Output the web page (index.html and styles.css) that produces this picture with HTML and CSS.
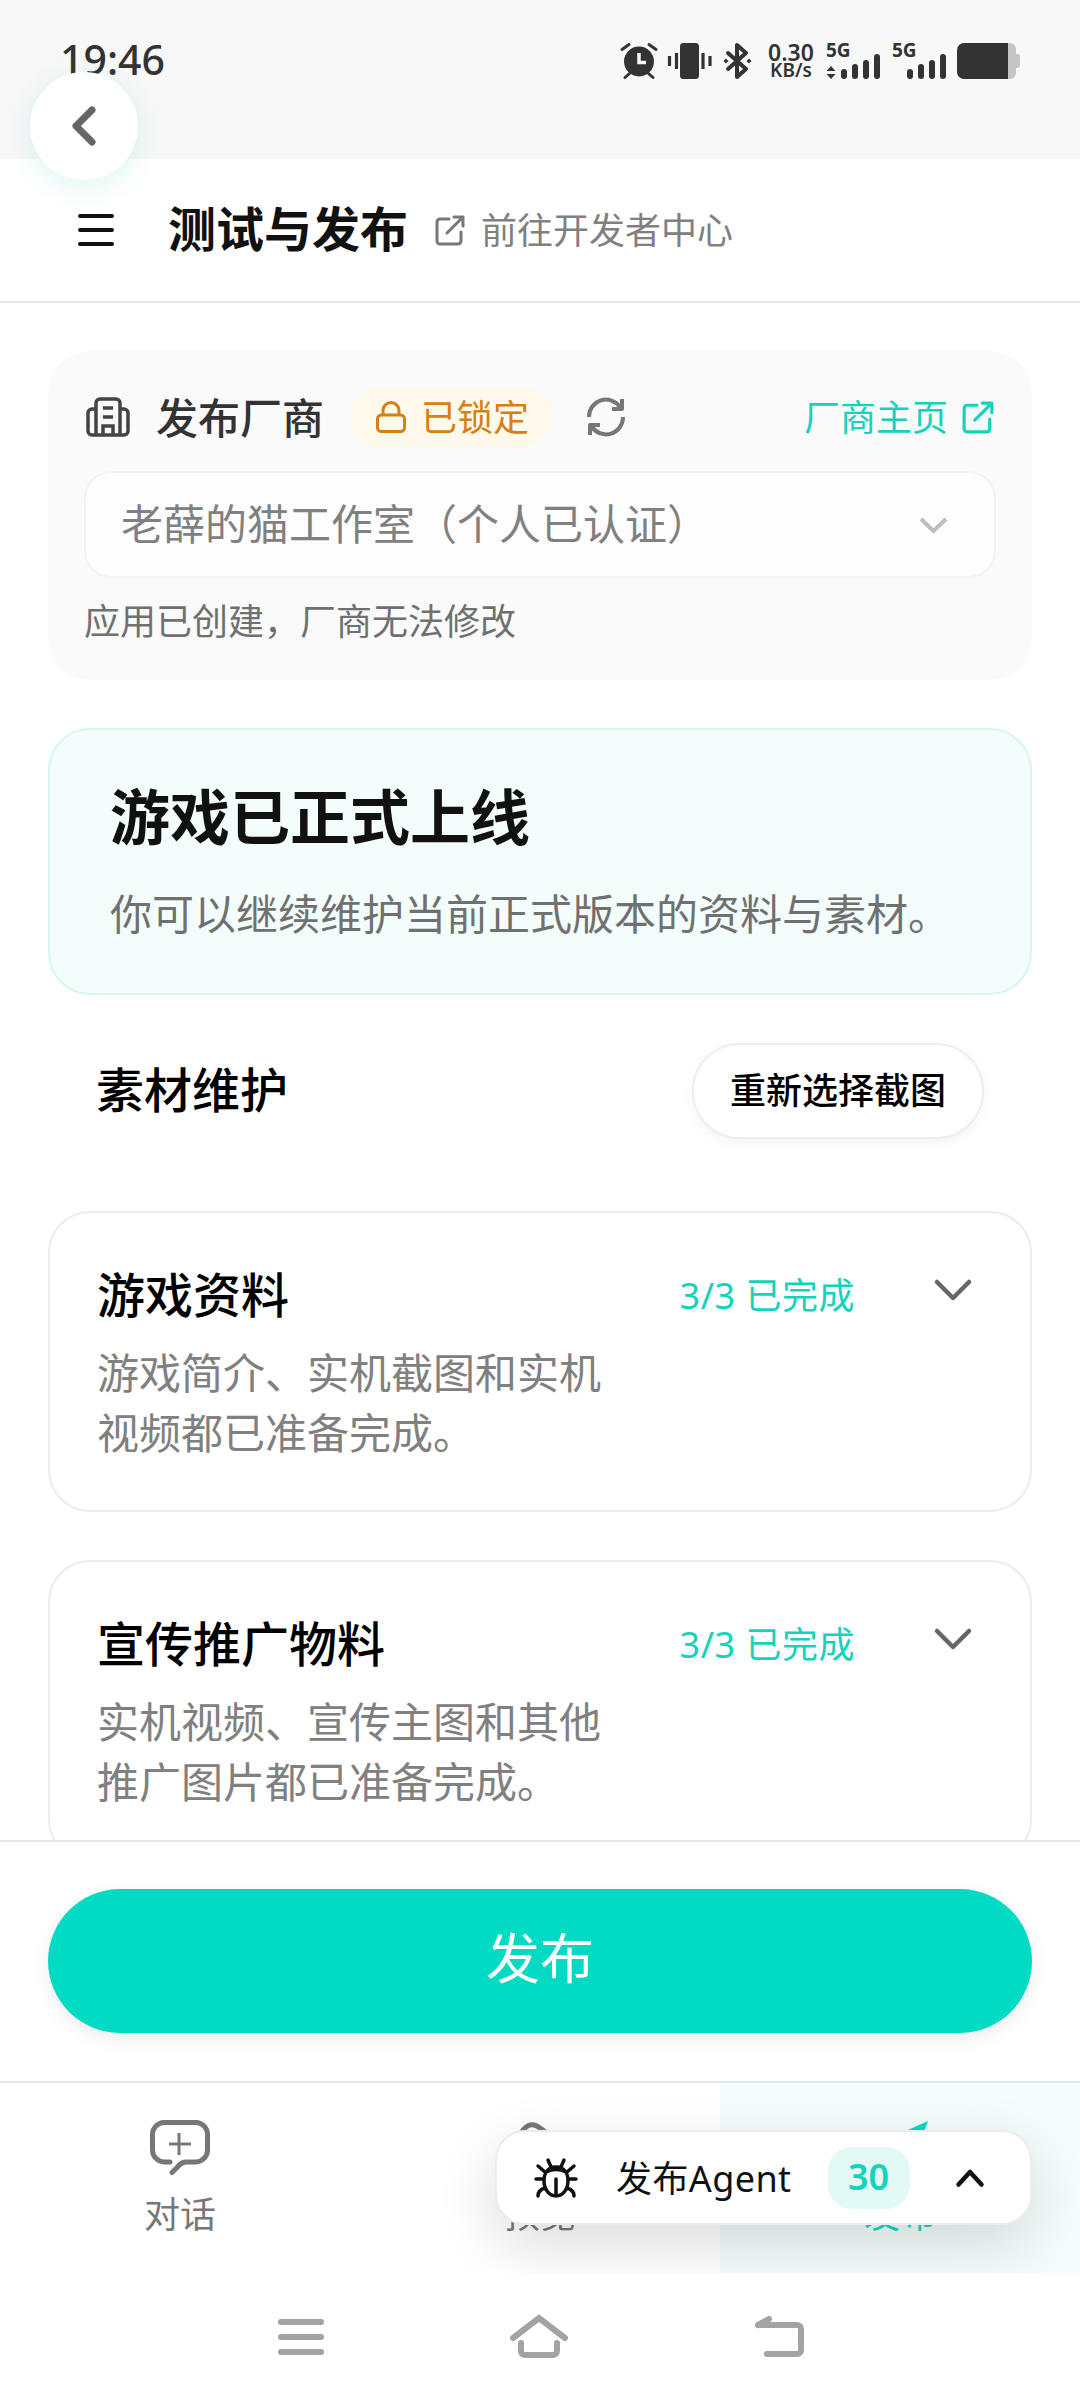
FILE: index.html
```html
<!DOCTYPE html>
<html lang="zh-CN">
<head>
    <meta charset="UTF-8">
    <title>测试与发布</title>
    <link rel="stylesheet" href="styles.css">
</head>
<body>

<div class="screen">

    <div class="status-bar">
        <span class="status-time">19:46</span>
        <div class="status-icons">
            <svg class="ico-alarm" width="36" height="36" viewBox="0 0 36 36">
                <circle cx="18" cy="18.5" r="15" fill="#333"/>
                <path d="M18 10v9.500h7" fill="none" stroke="#f8f8f8" stroke-width="3.500"/>
                <path d="M1 6.500L8 1.500M28 1.500l7 5M4 34.500l4.500-4M27.500 30.500l4.500 4" fill="none" stroke="#333" stroke-width="3" stroke-linecap="round"/>
            </svg>
            <svg class="ico-vibrate" width="44" height="36" viewBox="0 0 44 36">
                <rect x="12" y="0" width="19" height="36" rx="3.500" fill="#333"/>
                <path d="M1.500 13v10M8.500 10v16M35 10v16M42 13v10" stroke="#333" stroke-width="3.200"/>
            </svg>
            <svg class="ico-bt" width="29" height="36" viewBox="0 0 29 36">
                <path d="M5 10L23 26L14 34V2L23 10L5 26" fill="none" stroke="#333" stroke-width="4" stroke-linejoin="round" stroke-linecap="round"/>
                <path d="M3 15.500L5.500 18L3 20.500L0.500 18zM26 15.500L28.500 18L26 20.500L23.500 18z" fill="#333"/>
            </svg>
            <div class="status-speed">
                <span class="speed-num">0.30</span>
                <span class="speed-unit">KB/s</span>
            </div>
            <div class="signal">
                <span class="signal-text">5G</span>
                <svg width="54" height="22" viewBox="0 0 54 22">
                    <path d="M5 9l4.500 5h-9zM5 22l4.500-5h-9z" fill="#333"/>
                    <rect x="15" y="12" width="6" height="10" rx="3" fill="#333"/>
                    <rect x="26" y="7" width="6" height="15" rx="3" fill="#333"/>
                    <rect x="37" y="3" width="6" height="19" rx="3" fill="#333"/>
                    <rect x="48" y="-3" width="6" height="25" rx="3" fill="#333"/>
                </svg>
            </div>
            <div class="signal">
                <span class="signal-text">5G</span>
                <svg width="54" height="22" viewBox="0 0 54 22">
                    <rect x="15" y="12" width="6" height="10" rx="3" fill="#333"/>
                    <rect x="26" y="7" width="6" height="15" rx="3" fill="#333"/>
                    <rect x="37" y="3" width="6" height="19" rx="3" fill="#333"/>
                    <rect x="48" y="-3" width="6" height="25" rx="3" fill="#333"/>
                </svg>
            </div>
            <svg class="ico-battery" width="63" height="36" viewBox="0 0 63 36">
                <path d="M51 0h2a6 6 0 0 1 6 6v5h1a3 3 0 0 1 3 3v8a3 3 0 0 1-3 3h-1v5a6 6 0 0 1-6 6h-2z" fill="#c6c6c6"/>
                <path d="M7 0h44v36H7a7 7 0 0 1-7-7V7a7 7 0 0 1 7-7z" fill="#333"/>
            </svg>
        </div>
    </div>

    <div class="page-header">
        <svg class="menu-icon" width="36" height="32" viewBox="0 0 36 32">
            <path d="M2 2h32M2 16h32M2 30h32" stroke="#111" stroke-width="4" stroke-linecap="round"/>
        </svg>
        <h1 class="page-title">测试与发布</h1>
        <svg class="ext-icon" width="30" height="30" viewBox="0 0 30 30">
            <path d="M14 4H5a3 3 0 0 0-3 3v19a3 3 0 0 0 3 3h18a3 3 0 0 0 3-3V17M12 18L28 2M19 2h9v9" fill="none" stroke="#777" stroke-width="3" stroke-linecap="round" stroke-linejoin="round"/>
        </svg>
        <span class="dev-link">前往开发者中心</span>
    </div>

    <div class="content">
        <div class="vendor-card">
            <div class="vendor-row">
                <svg class="building-icon" width="44" height="40" viewBox="0 0 44 40">
                    <path d="M10 12H6a4 4 0 0 0-4 4v18a4 4 0 0 0 4 4h32a4 4 0 0 0 4-4V16a4 4 0 0 0-4-4h-4" fill="none" stroke="#444" stroke-width="3.500"/>
                    <path d="M10 38V6a4 4 0 0 1 4-4h16a4 4 0 0 1 4 4v32M17 11h10M17 20h10M17 38v-9h10v9" fill="none" stroke="#444" stroke-width="3.500"/>
                </svg>
                <span class="vendor-label">发布厂商</span>
                <span class="lock-pill">
                    <svg width="30" height="32" viewBox="0 0 30 32">
                        <rect x="1.500" y="14" width="27" height="16.500" rx="4" fill="none" stroke="#d67f14" stroke-width="3"/>
                        <path d="M7 14V9.500a8 8 0 0 1 16 0V14" fill="none" stroke="#d67f14" stroke-width="3"/>
                    </svg>
                    <span class="lock-text">已锁定</span>
                </span>
                <svg class="refresh-icon" width="40" height="40" viewBox="0 0 40 40">
                    <path d="M3 20A17 17 0 0 1 34 10M37 20A17 17 0 0 1 6 30M36 2v10H26M4 38V28h10" fill="none" stroke="#777" stroke-width="4" stroke-linejoin="round"/>
                </svg>
                <span class="vendor-home">厂商主页</span>
                <svg width="32" height="32" viewBox="0 0 30 30">
                    <path d="M14 4H5a3 3 0 0 0-3 3v19a3 3 0 0 0 3 3h18a3 3 0 0 0 3-3V17M12 18L28 2M19 2h9v9" fill="none" stroke="#14d3bb" stroke-width="3" stroke-linecap="round" stroke-linejoin="round"/>
                </svg>
            </div>
            <div class="vendor-select">
                <span class="select-text">老薛的猫工作室（个人已认证）</span>
                <svg width="29" height="16" viewBox="0 0 29 16">
                    <path d="M2 2l12.500 12L27 2" fill="none" stroke="#bdbdbd" stroke-width="4"/>
                </svg>
            </div>
            <p class="vendor-note">应用已创建，厂商无法修改</p>
        </div>

        <div class="online-banner">
            <h2 class="banner-title">游戏已正式上线</h2>
            <p class="banner-text">你可以继续维护当前正式版本的资料与素材。</p>
        </div>

        <div class="section-row">
            <span class="section-title">素材维护</span>
            <button class="reselect-btn">重新选择截图</button>
        </div>

        <div class="info-card">
            <div class="info-head">
                <span class="info-title">游戏资料</span>
                <span class="info-status">3/3 已完成</span>
                <svg class="info-chevron" width="36" height="20" viewBox="0 0 36 20">
                    <path d="M2 2l16 16L34 2" fill="none" stroke="#666" stroke-width="4.500" stroke-linecap="round" stroke-linejoin="round"/>
                </svg>
            </div>
            <p class="info-desc">游戏简介、实机截图和实机<br>视频都已准备完成。</p>
        </div>

        <div class="info-card">
            <div class="info-head">
                <span class="info-title">宣传推广物料</span>
                <span class="info-status">3/3 已完成</span>
                <svg class="info-chevron" width="36" height="20" viewBox="0 0 36 20">
                    <path d="M2 2l16 16L34 2" fill="none" stroke="#666" stroke-width="4.500" stroke-linecap="round" stroke-linejoin="round"/>
                </svg>
            </div>
            <p class="info-desc">实机视频、宣传主图和其他<br>推广图片都已准备完成。</p>
        </div>
    </div>

    <div class="publish-bar">
        <button class="publish-btn">发布</button>
    </div>

    <div class="tab-bar">
        <div class="tab">
            <svg width="60" height="56" viewBox="0 0 60 56">
                <path d="M20 42h-6A12 12 0 0 1 2.500 30V14A12 12 0 0 1 14 2.500h32A12 12 0 0 1 57.500 14v16A12 12 0 0 1 46 42H36c-4 0-6 2-8 4.500l-6 6" fill="none" stroke="#777" stroke-width="5" stroke-linecap="round"/>
                <path d="M29 13v22M19 24h22" stroke="#777" stroke-width="3"/>
            </svg>
            <span>对话</span>
        </div>
        <div class="tab">
            <svg width="60" height="56" viewBox="0 0 60 56">
                <path d="M8 18Q18-2 30 8l16 12a10 10 0 0 1 0 14L34 50a8 8 0 0 1-12 0L8 34a10 10 0 0 1 0-16z" fill="none" stroke="#777" stroke-width="5"/>
            </svg>
            <span>预览</span>
        </div>
        <div class="tab tab-active">
            <svg width="60" height="56" viewBox="0 0 60 56">
                <path d="M58 1L38 54 26 34 4 25z" fill="#02dbc4"/>
            </svg>
            <span>发布</span>
        </div>
    </div>

    <div class="nav-bar">
        <svg width="46" height="36" viewBox="0 0 46 36">
            <path d="M3 3h40M3 18h40M3 33h40" stroke="#a3a3a3" stroke-width="6" stroke-linecap="round"/>
        </svg>
        <svg width="58" height="43" viewBox="0 0 58 43">
            <path d="M3 23L29 3l26 20M11 28v8a4 4 0 0 0 4 4h28a4 4 0 0 0 4-4v-8" fill="none" stroke="#a3a3a3" stroke-width="6" stroke-linecap="round"/>
        </svg>
        <svg width="50" height="41" viewBox="0 0 50 41">
            <path d="M4 9h39a4 4 0 0 1 4 4v21a4 4 0 0 1-4 4H13M4 9l11-6" fill="none" stroke="#a3a3a3" stroke-width="6" stroke-linecap="round"/>
        </svg>
    </div>

    <button class="back-btn">
        <svg width="24" height="38" viewBox="0 0 24 38">
            <path d="M20 3L4 19l16 16" fill="none" stroke="#666" stroke-width="7" stroke-linecap="round" stroke-linejoin="round"/>
        </svg>
    </button>

    <div class="agent-panel">
        <svg class="bug-icon" width="44" height="40" viewBox="0 0 44 40">
            <path d="M22 9c8 0 12 6 12 14s-5 15-12 15-12-7-12-15 4-14 12-14zM22 21v17M12 14q10-5 20 0M14 2l3 7M30 2l-3 7M2 21h8M34 21h8M4 8l7 6M40 8l-7 6M4 38q0-6 7-8M40 38q0-6-7-8" fill="none" stroke="#111" stroke-width="3.500" stroke-linecap="round"/>
        </svg>
        <span class="agent-name">发布Agent</span>
        <span class="agent-count">30</span>
        <svg class="agent-chevron" width="28" height="18" viewBox="0 0 28 18">
            <path d="M2.500 15.500L14 3l11.500 12.500" fill="none" stroke="#111" stroke-width="4.500" stroke-linecap="round" stroke-linejoin="round"/>
        </svg>
    </div>

</div>

</body>
</html>
```

FILE: styles.css
```css
body {
    margin: 0;
    background-color: #fff;
    font-family: "Noto Sans", "Noto Sans CJK SC", sans-serif;
    color: #111;
}

h1, h2, p {
    margin: 0;
}

button {
    font-family: inherit;
    cursor: pointer;
}

svg {
    display: block;
    flex: none;
    overflow: visible;
}

.screen {
    position: relative;
    width: 1080px;
    height: 2400px;
    display: flex;
    flex-direction: column;
    overflow: hidden;
}

/* status bar */
.status-bar {
    height: 159px;
    flex: none;
    background-color: #f8f8f8;
    display: flex;
    justify-content: space-between;
    align-items: flex-start;
    padding: 42px 60px 0 60px;
    box-sizing: border-box;
    color: #333;
}

.status-time {
    font-size: 41px;
    font-weight: 500;
    line-height: 34px;
}

.status-icons {
    display: flex;
    align-items: center;
}

.ico-alarm {
    margin-left: -1px;
}

.ico-vibrate {
    margin-left: 11px;
}

.ico-bt {
    margin-left: 11px;
}

.status-speed {
    margin-left: 16px;
    width: 46px;
    display: flex;
    flex-direction: column;
    align-items: center;
    font-weight: 600;
}

.speed-num {
    font-size: 23px;
    line-height: 20px;
}

.speed-unit {
    font-size: 19px;
    line-height: 17px;
}

.signal {
    margin-left: 12px;
    display: flex;
    flex-direction: column;
    width: 54px;
    height: 36px;
}

.signal-text {
    height: 14px;
    font-size: 19px;
    font-weight: 700;
    line-height: 14px;
}

.ico-battery {
    margin-left: 11px;
}

/* header */
.page-header {
    height: 144px;
    flex: none;
    box-sizing: border-box;
    border-bottom: 2px solid #e8e8e8;
    display: flex;
    align-items: center;
    padding-left: 78px;
}

.page-title {
    margin-left: 54px;
    padding-bottom: 3px;
    font-size: 48px;
    font-weight: 700;
    line-height: 72px;
}

.ext-icon {
    margin-left: 27px;
}

.dev-link {
    margin-left: 16px;
    padding-bottom: 3px;
    font-size: 36px;
    color: #808080;
}

/* scroll area */
.content {
    flex: 1;
    min-height: 0;
    overflow: hidden;
    padding: 48px 48px 0 48px;
}

.vendor-card {
    background-color: #fafafa;
    border-radius: 42px;
    padding: 36px;
    margin-bottom: 48px;
}

.vendor-row {
    height: 60px;
    display: flex;
    align-items: center;
    margin-bottom: 24px;
}

.building-icon {
    margin-left: 2px;
}

.vendor-label {
    margin-left: 26px;
    padding-bottom: 3px;
    font-size: 42px;
    font-weight: 500;
    color: #333;
}

.lock-pill {
    margin-left: 26px;
    height: 60px;
    padding: 0 24px 0 26px;
    border-radius: 30px;
    background-color: #fff9eb;
    color: #d67f14;
    font-size: 36px;
    display: flex;
    align-items: center;
    gap: 15px;
}

.lock-text {
    padding-bottom: 4px;
}

.refresh-icon {
    margin-left: 33px;
}

.vendor-home {
    margin-left: auto;
    padding-bottom: 4px;
    font-size: 36px;
    color: #14d3bb;
}

.vendor-home + svg {
    margin-left: 14px;
    margin-right: 2px;
}

.vendor-select {
    height: 107px;
    box-sizing: border-box;
    background-color: #fdfdfd;
    border: 2px solid #f2f2f2;
    border-radius: 27px;
    padding: 0 46px 0 35px;
    display: flex;
    align-items: center;
    justify-content: space-between;
    font-size: 42px;
    color: #808080;
}

.select-text {
    padding-bottom: 6px;
}

.vendor-note {
    margin-top: 20px;
    margin-bottom: -2px;
    font-size: 36px;
    line-height: 48px;
    color: #707070;
}

.online-banner {
    box-sizing: border-box;
    height: 267px;
    background-color: #f3fdfb;
    border: 2px solid #d8f6f1;
    border-radius: 42px;
    padding: 45px 60px;
    margin-bottom: 48px;
}

.banner-title {
    font-size: 60px;
    font-weight: 700;
    line-height: 84px;
}

.banner-text {
    margin-top: 25px;
    font-size: 42px;
    line-height: 60px;
    color: #707070;
}

.section-row {
    display: flex;
    align-items: center;
    justify-content: space-between;
    padding: 0 48px;
    margin-bottom: 72px;
}

.section-title {
    padding-bottom: 8px;
    font-size: 48px;
    font-weight: 500;
    color: #000;
}

.reselect-btn {
    height: 96px;
    box-sizing: border-box;
    padding: 0 36px 6px 36px;
    border: 2px solid #eee;
    border-radius: 48px;
    background-color: #fff;
    box-shadow: 0 4px 12px rgba(0, 0, 0, 0.05);
    font-size: 36px;
    font-weight: 500;
    color: #000;
}

.info-card {
    border: 2px solid #ececec;
    border-radius: 42px;
    padding: 47px 48px 47px 47px;
    margin-bottom: 48px;
}

.info-head {
    display: flex;
    align-items: center;
    height: 72px;
}

.info-title {
    flex: 1;
    padding-bottom: 8px;
    font-size: 48px;
    font-weight: 500;
    color: #000;
}

.info-status {
    padding-bottom: 6px;
    font-size: 36px;
    letter-spacing: 0.5px;
    color: #14d3bb;
}

.info-chevron {
    margin: 0 11px 12px 80px;
}

.info-desc {
    margin-top: 11px;
    font-size: 42px;
    line-height: 60px;
    color: #808080;
}

/* publish button */
.publish-bar {
    height: 241px;
    flex: none;
    box-sizing: border-box;
    border-top: 2px solid #e8e8e8;
    background-color: #fff;
    padding: 47px 48px;
}

.publish-btn {
    display: block;
    width: 100%;
    height: 144px;
    padding: 0 0 12px 0;
    border: none;
    border-radius: 72px;
    background-color: #02dbc4;
    box-shadow: 0 6px 18px rgba(0, 0, 0, 0.08);
    color: #fff;
    font-size: 54px;
}

/* tabs */
.tab-bar {
    height: 192px;
    flex: none;
    box-sizing: border-box;
    border-top: 2px solid #e8e8e8;
    display: grid;
    grid-template-columns: repeat(3, 1fr);
}

.tab {
    display: flex;
    flex-direction: column;
    align-items: center;
    padding-top: 37px;
    gap: 15px;
    font-size: 36px;
    line-height: 48px;
    color: #777;
}

.tab-active {
    background-color: #f3fdfb;
    color: #02dbc4;
}

/* android nav */
.nav-bar {
    position: relative;
    z-index: 2;
    height: 127px;
    flex: none;
    box-sizing: border-box;
    padding-left: 2px;
    background-color: #fff;
    display: flex;
    justify-content: center;
    align-items: center;
    gap: 186px;
}

/* floating things */
.back-btn {
    position: absolute;
    left: 30px;
    top: 72px;
    width: 108px;
    height: 108px;
    padding: 0;
    border: none;
    border-radius: 50%;
    background-color: #fff;
    box-shadow: 0 6px 30px rgba(0, 190, 170, 0.14);
    display: flex;
    align-items: center;
    justify-content: center;
}

.agent-panel {
    position: absolute;
    z-index: 1;
    left: 495px;
    top: 2130px;
    width: 537px;
    height: 95px;
    box-sizing: border-box;
    background-color: #fff;
    border: 2px solid #ececec;
    border-radius: 30px;
    box-shadow: 0 20px 60px rgba(0, 0, 0, 0.14);
    display: flex;
    align-items: center;
    padding-left: 37px;
}

.agent-name {
    margin-left: 38px;
    padding-bottom: 3px;
    font-size: 36px;
    letter-spacing: 0.4px;
    color: #111;
}

.agent-count {
    margin-left: 36px;
    width: 82px;
    height: 62px;
    box-sizing: border-box;
    padding-bottom: 2px;
    border-radius: 24px;
    background-color: #e2f9f6;
    color: #14d3bb;
    font-size: 36px;
    font-weight: 600;
    display: flex;
    align-items: center;
    justify-content: center;
}

.agent-chevron {
    margin-left: 46px;
}
```
